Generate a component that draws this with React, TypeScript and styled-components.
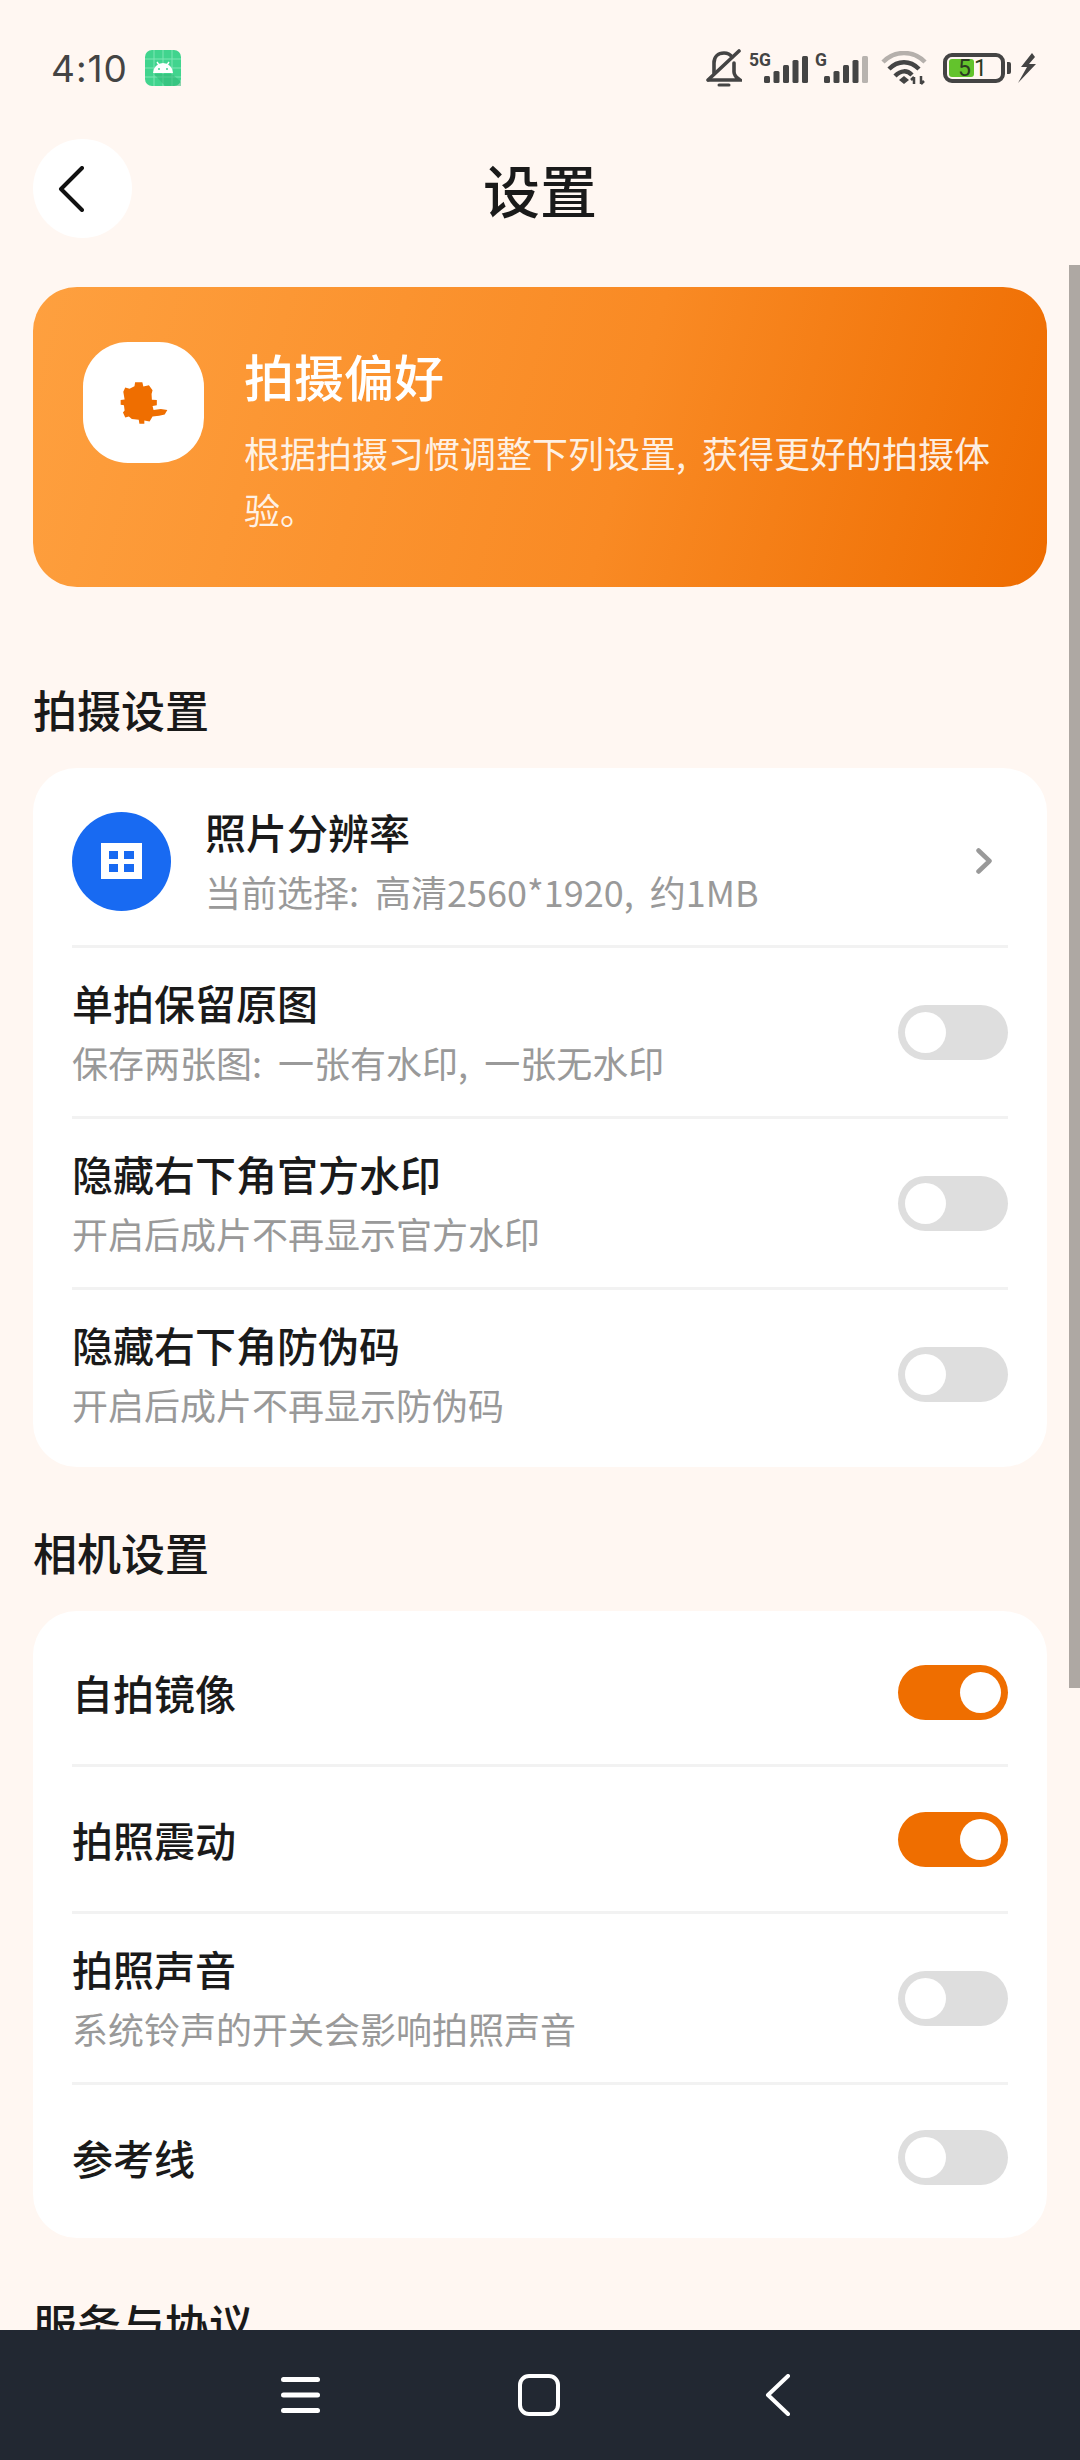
import React from "react";
import styled, { createGlobalStyle } from "styled-components";

const GlobalStyle = createGlobalStyle`
  html, body { margin: 0; padding: 0; background: #fff7f2; }
  * { box-sizing: border-box; }
`;

const Page = styled.div`
  width: 1080px;
  height: 2460px;
  display: flex;
  flex-direction: column;
  overflow: hidden;
  background: #fff7f2;
  color: #1a1a1a;
  font-family: "Noto Sans CJK SC", "Noto Sans", sans-serif;
`;

const StatusBar = styled.div`
  height: 100px;
  flex: none;
  display: flex;
  align-items: center;
  padding: 36px 44px 0 51px;
  color: #444;
`;

const Time = styled.span`
  font-family: Inter, Roboto, sans-serif;
  font-size: 37px;
  letter-spacing: 1px;
  font-weight: 400;
  color: #444;
  margin-right: 17px;
`;

const StatusIcons = styled.div`
  margin-left: auto;
  display: flex;
  align-items: center;
`;

const SignalSlot = styled.div`
  margin-left: 7px;
  display: flex;
`;

const WifiSlot = styled.div`
  margin-left: 13px;
  display: flex;
`;

const BatteryBox = styled.div`
  position: relative;
  width: 62px;
  height: 30px;
  margin-left: 16px;
  border: 4px solid #444;
  border-radius: 9px;
  padding: 2px;
`;

const BatteryFill = styled.div<{ $level: number }>`
  height: 100%;
  width: ${(p) => p.$level}%;
  background: #63c32c;
  border-radius: 3px;
`;

const BatteryText = styled.span`
  position: absolute;
  inset: 0;
  display: flex;
  align-items: center;
  justify-content: center;
  font-family: Roboto, sans-serif;
  font-size: 23px;
  letter-spacing: 3px;
  color: #2b3a20;
`;

const BatteryTip = styled.div`
  width: 4px;
  height: 12px;
  margin: 0 7px 0 2px;
  background: #444;
  border-radius: 0 2px 2px 0;
`;

const Header = styled.div`
  height: 165px;
  flex: none;
  padding: 39px 33px 0;
  display: flex;
  align-items: flex-start;
`;

const BackButton = styled.button`
  width: 99px;
  height: 99px;
  padding: 0 0 0 25px;
  border: none;
  border-radius: 50%;
  background: #fff;
  display: flex;
  align-items: center;
  justify-content: flex-start;
`;

const Title = styled.h1`
  flex: 1;
  margin: 0 99px 0 0;
  height: 99px;
  line-height: 99px;
  text-align: center;
  font-size: 57px;
  font-weight: 500;
`;

const Scroller = styled.div`
  position: relative;
  flex: 1;
  min-height: 0;
  overflow: hidden;
  padding: 22px 33px 0;
`;

const ScrollThumb = styled.div`
  position: absolute;
  top: 0;
  right: 0;
  width: 11px;
  height: 1423px;
  background: #aea8a3;
`;

const Banner = styled.section`
  display: flex;
  align-items: flex-start;
  height: 300px;
  padding: 50px 36px 0 50px;
  border-radius: 44px;
  background: linear-gradient(105deg, #fea03f 0%, #f98a24 58%, #ee6c00 100%);
  color: #fff;
`;

const BannerTile = styled.div`
  width: 121px;
  height: 121px;
  margin-top: 5px;
  flex: none;
  border-radius: 45px;
  background: #fff;
  display: flex;
  align-items: center;
  justify-content: center;
`;

const BannerBody = styled.div`
  margin-left: 40px;
  min-width: 0;
`;

const BannerTitle = styled.div`
  font-size: 50px;
  line-height: 76px;
  font-weight: 500;
  margin-bottom: 11px;
`;

const BannerText = styled.div`
  font-size: 36px;
  line-height: 57px;
  word-spacing: 8px;
  color: rgba(255, 255, 255, 0.88);
`;

const SectionTitle = styled.h2<{ $first?: boolean }>`
  margin: ${(p) => (p.$first ? "92px" : "55px")} 0 29px 0;
  font-size: 44px;
  line-height: 60px;
  font-weight: 500;
`;

const Card = styled.div`
  background: #fff;
  border-radius: 44px;
  padding: 9px 39px;
`;

const Row = styled.div`
  min-height: 144px;
  padding: 26px 0;
  display: flex;
  align-items: center;
  & + & {
    min-height: 147px;
    border-top: 3px solid #f2f2f2;
  }
`;

const RoundIcon = styled.div`
  width: 99px;
  height: 99px;
  flex: none;
  margin-right: 34px;
  border-radius: 50%;
  background: #186af2;
  display: flex;
  align-items: center;
  justify-content: center;
`;

const RowText = styled.div`
  flex: 1;
  min-width: 0;
`;

const RowTitle = styled.div`
  font-size: 41px;
  line-height: 56px;
  font-weight: 500;
  color: #1a1a1a;
`;

const RowSub = styled.div`
  margin-top: 4px;
  font-size: 36px;
  line-height: 56px;
  word-spacing: 8px;
  color: #999;
`;

const ChevronSlot = styled.div`
  margin-right: 16px;
  display: flex;
`;

const Toggle = styled.div<{ $on?: boolean }>`
  width: 110px;
  height: 55px;
  flex: none;
  padding: 7px;
  border-radius: 28px;
  background: ${(p) => (p.$on ? "#ef6e00" : "#dedede")};
  display: flex;
  justify-content: ${(p) => (p.$on ? "flex-end" : "flex-start")};
`;

const Knob = styled.div`
  width: 41px;
  height: 41px;
  border-radius: 50%;
  background: #fff;
`;

const NavBar = styled.div`
  height: 130px;
  flex: none;
  background: #222832;
  display: grid;
  grid-template-columns: 237px 247px 26px;
  align-items: center;
  padding: 0 0 0 281px;
`;

const NavButton = styled.div`
  display: flex;
  align-items: center;
`;

const AndroidIcon = () => (
  <svg width="36" height="36" viewBox="0 0 36 36">
    <rect width="36" height="36" rx="7" fill="#41d48e" />
    <path d="M9 0v36M18 0v36M27 0v36M0 9h36M0 18h36M0 27h36" stroke="#7fe6b4" strokeWidth="1" />
    <path d="M9 24 L27 24 L36 32 L36 36 L20 36 Z" fill="#2fb877" opacity="0.55" />
    <path d="M8 23a10 10 0 0 1 20 0z" fill="#fff" />
    <path d="M12 12l2 3M24 12l-2 3" stroke="#fff" strokeWidth="1.4" />
    <circle cx="14" cy="19" r="1" fill="#41d48e" />
    <circle cx="22" cy="19" r="1" fill="#41d48e" />
  </svg>
);

const BellOff = () => (
  <svg width="36" height="38" viewBox="0 0 36 38" fill="none" stroke="#444" strokeWidth="3.6" strokeLinecap="round">
    <path d="M8 24V14C8 8 12 4 18 4c3 0 6 1 8 4" />
    <path d="M28 14v9c0 3 3 6 6 8H3" />
    <path d="M2 31 L33 2" />
    <path d="M13 36h10" strokeWidth="3" />
  </svg>
);

const barHeights = [7, 12, 18, 23, 27];

const Signal = ({ label, dim, labelWidth }: { label: string; dim?: boolean; labelWidth: number }) => (
  <svg width={44 + labelWidth} height="40" viewBox={`0 -4 ${44 + labelWidth} 40`}>
    <text x="0" y="14" fontFamily="Roboto, sans-serif" fontSize="17.5" fontWeight="700" fill="#444">
      {label}
    </text>
    {barHeights.map((h, i) => (
      <rect
        key={i}
        x={labelWidth + i * 9.5}
        y={31 - h}
        width="6"
        height={h}
        rx="1.5"
        fill={dim && i === 4 ? "#b8b3af" : "#444"}
      />
    ))}
  </svg>
);

const Wifi = () => (
  <svg width="46" height="34" viewBox="0 0 46 34" fill="none">
    <path d="M2 11 C14 -1 32 -1 44 11" stroke="#b5b0ac" strokeWidth="4.5" />
    <path d="M8 18 C17 9 29 9 38 18" stroke="#444" strokeWidth="4.5" />
    <path d="M14 25 C20 19 26 19 31 24" stroke="#444" strokeWidth="4.5" />
    <path d="M18 29 L23 25 L28 29 L23 33 Z" fill="#444" />
    <path d="M33 33V26M33 26l-3 3M40 25v8M40 33l3-3" stroke="#444" strokeWidth="2.5" />
  </svg>
);

const Bolt = () => (
  <svg width="18" height="30" viewBox="0 0 18 30">
    <path d="M14 0 L3 14 L9 14 L0 30 L18 11 L11 11 L17 4 Z" fill="#444" />
  </svg>
);

const ChevronLeft = () => (
  <svg width="26" height="46" viewBox="0 0 26 46" fill="none" stroke="#111" strokeWidth="4" strokeLinecap="round" strokeLinejoin="round">
    <path d="M24 2 L3 23 L24 44" />
  </svg>
);

const ChevronRight = () => (
  <svg width="16" height="26" viewBox="0 0 16 26" fill="none" stroke="#999" strokeWidth="4.5" strokeLinecap="round" strokeLinejoin="round">
    <path d="M2.5 2.5 L13.5 13 L2.5 23.5" />
  </svg>
);

const GearMark = () => (
  <svg width="48" height="44" viewBox="176 174 146 130">
    <path
      fill="#ef6e00"
      d="M222 176 L244 176 L247 189 L264 185 L275 200 L272 212 L273 229 L288 230 L288 246 L275 248 L278 260 L300 257 L320 260 L312 274 L295 278 L275 280 L266 295 L250 292 L250 302 L235 302 L233 290 L212 288 L203 280 L192 283 L185 268 L190 262 L188 246 L178 244 L178 230 L190 228 L186 205 L192 192 L205 196 L220 188 Z"
    />
  </svg>
);

const GridMark = () => (
  <svg width="41" height="36" viewBox="0 0 41 36">
    <rect width="41" height="36" fill="#fff" />
    <rect x="8" y="8" width="9" height="8" fill="#186af2" />
    <rect x="23" y="8" width="10" height="8" fill="#186af2" />
    <rect x="8" y="21" width="9" height="8" fill="#186af2" />
    <rect x="23" y="21" width="10" height="8" fill="#186af2" />
  </svg>
);

const NavMenu = () => (
  <svg width="39" height="40" viewBox="0 0 39 40" fill="#fff">
    <rect y="2" width="39" height="5" rx="2.5" />
    <rect y="17.5" width="39" height="5" rx="2.5" />
    <rect y="33" width="39" height="5" rx="2.5" />
  </svg>
);

const NavHome = () => (
  <svg width="42" height="42" viewBox="0 0 42 42" fill="none" stroke="#fff" strokeWidth="4">
    <rect x="2" y="2" width="38" height="38" rx="9" />
  </svg>
);

const NavBack = () => (
  <svg width="26" height="42" viewBox="0 0 26 42" fill="none" stroke="#fff" strokeWidth="4" strokeLinecap="round" strokeLinejoin="round">
    <path d="M23 2 L3 21 L23 40" />
  </svg>
);

type SettingRow = { title: string; sub?: string; on?: boolean };

const captureRows: SettingRow[] = [
  { title: "单拍保留原图", sub: "保存两张图: 一张有水印, 一张无水印" },
  { title: "隐藏右下角官方水印", sub: "开启后成片不再显示官方水印" },
  { title: "隐藏右下角防伪码", sub: "开启后成片不再显示防伪码" },
];

const cameraRows: SettingRow[] = [
  { title: "自拍镜像", on: true },
  { title: "拍照震动", on: true },
  { title: "拍照声音", sub: "系统铃声的开关会影响拍照声音" },
  { title: "参考线" },
];

const ToggleRow = ({ title, sub, on }: SettingRow) => (
  <Row>
    <RowText>
      <RowTitle>{title}</RowTitle>
      {sub && <RowSub>{sub}</RowSub>}
    </RowText>
    <Toggle $on={on}>
      <Knob />
    </Toggle>
  </Row>
);

function App() {
  return (
    <Page>
      <GlobalStyle />
      <StatusBar>
        <Time>4:10</Time>
        <AndroidIcon />
        <StatusIcons>
          <BellOff />
          <SignalSlot>
            <Signal label="5G" labelWidth={15} />
          </SignalSlot>
          <SignalSlot>
            <Signal label="G" dim labelWidth={9} />
          </SignalSlot>
          <WifiSlot>
            <Wifi />
          </WifiSlot>
          <BatteryBox>
            <BatteryFill $level={50} />
            <BatteryText>51</BatteryText>
          </BatteryBox>
          <BatteryTip />
          <Bolt />
        </StatusIcons>
      </StatusBar>

      <Header>
        <BackButton>
          <ChevronLeft />
        </BackButton>
        <Title>设置</Title>
      </Header>

      <Scroller>
        <ScrollThumb />
        <Banner>
          <BannerTile>
            <GearMark />
          </BannerTile>
          <BannerBody>
            <BannerTitle>拍摄偏好</BannerTitle>
            <BannerText>根据拍摄习惯调整下列设置, 获得更好的拍摄体验。</BannerText>
          </BannerBody>
        </Banner>

        <SectionTitle $first>拍摄设置</SectionTitle>
        <Card>
          <Row>
            <RoundIcon>
              <GridMark />
            </RoundIcon>
            <RowText>
              <RowTitle>照片分辨率</RowTitle>
              <RowSub>当前选择: 高清2560*1920, 约1MB</RowSub>
            </RowText>
            <ChevronSlot>
              <ChevronRight />
            </ChevronSlot>
          </Row>
          {captureRows.map((row) => (
            <ToggleRow key={row.title} {...row} />
          ))}
        </Card>

        <SectionTitle>相机设置</SectionTitle>
        <Card>
          {cameraRows.map((row) => (
            <ToggleRow key={row.title} {...row} />
          ))}
        </Card>

        <SectionTitle>服务与协议</SectionTitle>
      </Scroller>

      <NavBar>
        <NavButton>
          <NavMenu />
        </NavButton>
        <NavButton>
          <NavHome />
        </NavButton>
        <NavButton>
          <NavBack />
        </NavButton>
      </NavBar>
    </Page>
  );
}

export default App;
